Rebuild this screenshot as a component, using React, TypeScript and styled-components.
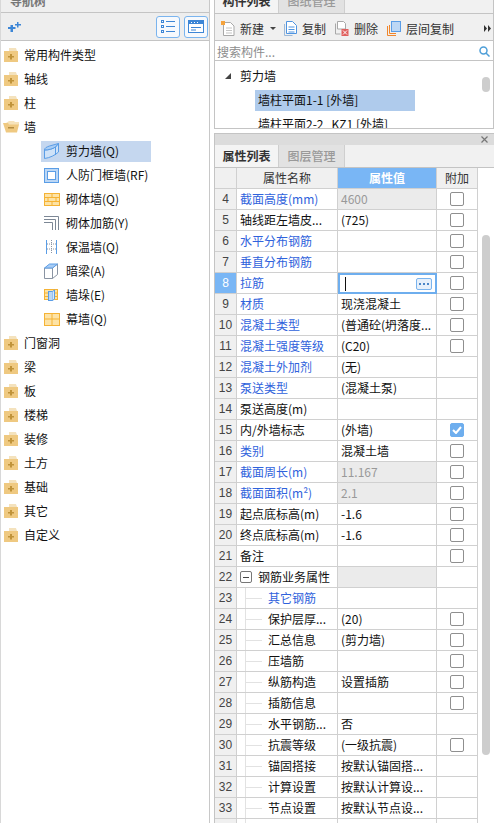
import React from "react";
import styled, { createGlobalStyle } from "styled-components";

const GlobalStyle = createGlobalStyle`
  html, body {
    margin: 0;
    padding: 0;
    background: #fff;
    overflow: hidden;
  }
  * { box-sizing: border-box; }
`;

const Page = styled.div`
  width: 494px;
  height: 823px;
  display: flex;
  overflow: hidden;
  background: #fff;
  color: #111;
  font: 12px/16px "Noto Sans CJK SC", "Liberation Sans", sans-serif;
`;

/* ---------- left navigation ---------- */
const NavPane = styled.div`
  width: 210px;
  flex: none;
  display: flex;
  flex-direction: column;
  border-right: 1px solid #c8c8c8;
  border-left: 1px solid #d8d8d8;
`;

const NavTitle = styled.div`
  height: 13px;
  flex: none;
  display: flex;
  align-items: flex-end;
  padding: 0 0 3px 9px;
  background: #efefef;
  border-bottom: 1px solid #c4c4c4;
  color: #777;
  font-weight: 700;
  overflow: hidden;
  white-space: nowrap;
`;

const NavTools = styled.div`
  height: 28px;
  flex: none;
  display: flex;
  align-items: center;
  padding: 0 1px 0 7px;
  gap: 4px;
  background: #eeeeee;
  border-bottom: 1px solid #c4c4c4;
`;

const ToolSpacer = styled.div`
  flex: 1;
`;

const ViewButton = styled.div`
  width: 24px;
  height: 22px;
  display: flex;
  align-items: center;
  justify-content: center;
  background: #f6f9fd;
  border: 1px solid #7ab4ee;
  border-radius: 3px;
`;

const NavTree = styled.div`
  padding-top: 2px;
  display: flex;
  flex-direction: column;
`;

const NavRow = styled.div<{ $child?: boolean }>`
  height: 24px;
  flex: none;
  display: flex;
  align-items: center;
  padding-left: ${(p) => (p.$child ? "40px" : "2px")};
`;

const RowIcon = styled.span<{ $child?: boolean }>`
  width: ${(p) => (p.$child ? "17px" : "21px")};
  height: 16px;
  flex: none;
  display: flex;
  align-items: center;
  margin-left: ${(p) => (p.$child ? "3px" : "0")};
  margin-right: ${(p) => (p.$child ? "5px" : "0")};
`;

const RowLabel = styled.span`
  white-space: nowrap;
`;

const ChildSelection = styled.div<{ $active?: boolean }>`
  width: 110px;
  height: 21px;
  display: flex;
  align-items: center;
  background: ${(p) => (p.$active ? "#c5d7ef" : "transparent")};
`;

const Gutter = styled.div`
  width: 4px;
  flex: none;
`;

/* ---------- right side ---------- */
const RightPane = styled.div`
  flex: 1;
  min-width: 0;
  display: flex;
  flex-direction: column;
`;

const ListPanel = styled.div`
  height: 129px;
  flex: none;
  display: flex;
  flex-direction: column;
  border: 1px solid #c4c4c4;
  border-top: 0;
  overflow: hidden;
`;

const TabStrip = styled.div<{ $clipped?: boolean }>`
  height: ${(p) => (p.$clipped ? "14px" : "23px")};
  flex: none;
  display: flex;
  align-items: ${(p) => (p.$clipped ? "flex-end" : "stretch")};
  background: #f1f1f1;
  border-bottom: 1px solid #c4c4c4;
  overflow: hidden;
`;

const Tab = styled.div<{ $active?: boolean; $clipped?: boolean }>`
  width: ${(p) => (p.$active ? "64px" : "66px")};
  height: ${(p) => (p.$clipped ? "22px" : "auto")};
  flex: none;
  display: flex;
  align-items: center;
  justify-content: center;
  font-size: 12px;
  font-weight: ${(p) => (p.$active ? 700 : 500)};
  color: ${(p) => (p.$active ? "#333" : "#999")};
  background: ${(p) => (p.$active ? "#f4f4f4" : "#e2e2e2")};
  border-right: 1px solid #cfcfcf;
  white-space: nowrap;
  padding-bottom: ${(p) => (p.$clipped ? "2px" : "0")};
`;

const ListToolbar = styled.div`
  height: 27px;
  flex: none;
  display: flex;
  align-items: center;
  padding: 3px 0 0 6px;
  background: #f0f0f0;
  border-bottom: 1px solid #c4c4c4;
  position: relative;
`;

const ToolButton = styled.div<{ $gap?: number }>`
  display: flex;
  align-items: center;
  gap: 5px;
  margin-right: ${(p) => p.$gap ?? 9}px;
  white-space: nowrap;
  color: #333;
`;

const Caret = styled.span`
  width: 0;
  height: 0;
  margin-left: 1px;
  border-left: 3px solid transparent;
  border-right: 3px solid transparent;
  border-top: 3px solid #444;
`;

const MoreArrows = styled.span`
  position: absolute;
  right: 2px;
  top: 11px;
  display: flex;
`;

const SearchBar = styled.div`
  height: 20px;
  flex: none;
  display: flex;
  align-items: center;
  justify-content: space-between;
  padding: 2px 3px 0 2px;
  color: #8d8d8d;
  border-bottom: 1px solid #c4c4c4;
`;

const ListTree = styled.div`
  flex: 1;
  padding-top: 3px;
  position: relative;
  overflow: hidden;
`;

const ListRow = styled.div<{ $indent: number }>`
  height: 24px;
  display: flex;
  align-items: center;
  padding-left: ${(p) => p.$indent}px;
  white-space: nowrap;
`;

const ListItem = styled.div<{ $active?: boolean }>`
  width: 160px;
  height: 21px;
  display: flex;
  align-items: center;
  padding-left: 3px;
  white-space: pre;
  background: ${(p) => (p.$active ? "#afcbec" : "transparent")};
`;

const Triangle = styled.span`
  width: 0;
  height: 0;
  margin-right: 9px;
  border-left: 6px solid transparent;
  border-bottom: 6px solid #444;
`;

const ThumbList = styled.div`
  position: absolute;
  right: 3px;
  top: 16px;
  width: 8px;
  height: 15px;
  border-radius: 4px;
  background: #cdcdcd;
`;

const PanelGap = styled.div`
  height: 4px;
  flex: none;
`;

const PropsPanel = styled.div`
  flex: 1;
  min-height: 0;
  display: flex;
  flex-direction: column;
  border-left: 1px solid #c4c4c4;
  overflow: hidden;
`;

const PropsTitle = styled.div`
  height: 12px;
  flex: none;
  display: flex;
  align-items: center;
  justify-content: flex-end;
  padding-right: 6px;
  background: #dcdcdc;
  border-top: 1px solid #c4c4c4;
`;

const TableWrap = styled.div`
  flex: 1;
  min-height: 0;
  display: flex;
`;

const Table = styled.div`
  width: 263px;
  flex: none;
`;

const TableRow = styled.div`
  display: grid;
  grid-template-columns: 22px 101px 99px 41px;
  height: 21px;
`;

const HeaderCell = styled.div<{ $active?: boolean }>`
  display: flex;
  align-items: center;
  justify-content: center;
  background: ${(p) => (p.$active ? "#79b6f5" : "#f0f0f0")};
  color: ${(p) => (p.$active ? "#fff" : "#333")};
  font-weight: ${(p) => (p.$active ? 700 : 400)};
  border-right: 1px solid #d0d0d0;
  border-bottom: 1px solid #d0d0d0;
`;

const NumCell = styled.div<{ $active?: boolean }>`
  display: flex;
  align-items: center;
  justify-content: center;
  background: ${(p) => (p.$active ? "#79b6f5" : "#f0f0f0")};
  color: ${(p) => (p.$active ? "#fff" : "#444")};
  border-right: 1px solid #d0d0d0;
  border-bottom: 1px solid #d0d0d0;
  font-family: "Liberation Sans", "Noto Sans CJK SC", sans-serif;
`;

const NameCell = styled.div<{ $blue?: boolean }>`
  display: flex;
  align-items: center;
  padding-left: 3px;
  white-space: nowrap;
  overflow: hidden;
  color: ${(p) => (p.$blue ? "#2f62dc" : "#111")};
  background: #fff;
  border-right: 1px solid #d0d0d0;
  border-bottom: 1px solid #d0d0d0;
`;

const ValueCell = styled.div<{ $shade?: boolean; $muted?: boolean }>`
  display: flex;
  align-items: center;
  padding-left: 3px;
  white-space: nowrap;
  overflow: hidden;
  color: ${(p) => (p.$muted ? "#999" : "#111")};
  background: ${(p) => (p.$shade ? "#ebebeb" : "#fff")};
  border-right: 1px solid #d0d0d0;
  border-bottom: 1px solid #d0d0d0;
`;

const EditCell = styled.div`
  display: flex;
  align-items: center;
  justify-content: space-between;
  padding: 0 3px 0 5px;
  background: #fff;
  border: 2px solid #6eaeee;
`;

const Cursor = styled.span`
  width: 1px;
  height: 14px;
  background: #111;
`;

const EllipsisButton = styled.span`
  width: 16px;
  height: 12px;
  display: flex;
  align-items: center;
  justify-content: center;
  border: 1px solid #7ab4ee;
  border-radius: 2px;
  background: #e6f0fb;
`;

const CheckCell = styled.div`
  display: flex;
  align-items: center;
  justify-content: center;
  background: #fff;
  border-right: 1px solid #d0d0d0;
  border-bottom: 1px solid #d0d0d0;
`;

const CheckBox = styled.span<{ $checked?: boolean }>`
  width: 14px;
  height: 14px;
  display: flex;
  align-items: center;
  justify-content: center;
  border-radius: 2px;
  border: 1px solid ${(p) => (p.$checked ? "#6eaeee" : "#8f8f8f")};
  background: ${(p) => (p.$checked ? "#6eaeee" : "#fff")};
`;

const TreeGuide = styled.span`
  width: 23px;
  flex: none;
  height: 100%;
  margin-left: 5px;
  position: relative;
  border-left: 1px solid #e2e2e2;
  &::after {
    content: "";
    position: absolute;
    left: 0;
    right: 6px;
    top: 10px;
    height: 1px;
    background: #e2e2e2;
  }
`;

const GroupToggle = styled.span`
  width: 12px;
  height: 12px;
  flex: none;
  margin: 0 6px 0 0;
  display: flex;
  align-items: center;
  justify-content: center;
  border: 1px solid #777;
  border-radius: 2px;
  &::after {
    content: "";
    width: 6px;
    height: 1px;
    background: #444;
  }
`;

const ScrollTrack = styled.div`
  flex: 1;
  position: relative;
  background: #fff;
`;

const ScrollThumb = styled.div`
  position: absolute;
  left: 4px;
  top: 67px;
  width: 8px;
  height: 520px;
  border-radius: 4px;
  background: #cdcdcd;
`;

/* ---------- icons ---------- */
const FolderIcon = ({ open }: { open?: boolean }) =>
  open ? (
    <svg width="17" height="12" viewBox="0 0 17 12">
      <path d="M3 2l3-2h5l1 1h4v3H3z" fill="#f6e3bb" />
      <path d="M0 2h5l1 1.500h10L14 11.500H3z" fill="#efc981" />
      <rect x="5" y="6" width="6" height="1.500" fill="#b48d42" />
    </svg>
  ) : (
    <svg width="15" height="14" viewBox="0 0 15 14">
      <path d="M6 0h7l1 3H6z" fill="#f4e2bd" />
      <rect x="1" y="3" width="14" height="11" fill="#efc981" />
      <path d="M7 6h2v2h2v1.500H9v2H7v-2H5V8h2z" fill="#c0933a" />
    </svg>
  );

const ChildIcon = ({ kind }: { kind: string }) => {
  switch (kind) {
    case "shear":
      return (
        <svg width="16" height="16" viewBox="0 0 16 16" fill="none">
          <path d="M.5 7c4 0 8-1 11-3l3-3.500V9c-3 3-9 6-14 6.500z" fill="#cfe2f8" stroke="#5a9de6" />
          <path d="M.5 7c0-2 2-3 5-4l9-2.500-3 3.500c-3 2-7 3-11 3z" fill="#a9cdf5" stroke="#5a9de6" />
          <path d="M11.500 4v8" stroke="#5a9de6" />
        </svg>
      );
    case "door":
      return (
        <svg width="15" height="15" viewBox="0 0 15 15" fill="none">
          <rect x=".5" y=".5" width="14" height="14" fill="#bcd7f5" stroke="#5a9de6" />
          <rect x="3.500" y="3.500" width="8" height="8" fill="#fff" stroke="#5a9de6" />
        </svg>
      );
    case "brick":
      return (
        <svg width="16" height="13" viewBox="0 0 16 13" fill="none">
          <rect x=".5" y=".5" width="15" height="12" fill="#fde3a6" stroke="#f5b335" />
          <path d="M1 4.500h14M1 8.500h14M8 1v3.500M4 4.500v4M12 4.500v4M8 8.500V12" stroke="#f5b335" />
        </svg>
      );
    case "rebar":
      return (
        <svg width="15" height="14" viewBox="0 0 15 14" fill="none" stroke="#7c8795">
          <path d="M0 .5h14.500V14M0 3.500h11.500V14M0 6.500h8.500V14" />
        </svg>
      );
    case "insul":
      return (
        <svg width="13" height="14" viewBox="0 0 13 14" fill="none">
          <path d="M2.500 0v14M12.500 0v14" stroke="#5a9de6" />
          <path d="M7.500 0v14M3 4h9M3 9h9" stroke="#8a94a3" strokeDasharray="1 1" />
        </svg>
      );
    case "beam":
      return (
        <svg width="14" height="16" viewBox="0 0 14 16" fill="none">
          <path d="M.5 5v10.500h8V5z" fill="#fff" stroke="#8a94a3" />
          <path d="M8.500 15.500l5-4V1l-5 4z" fill="#fff" stroke="#8a94a3" />
          <path d="M.5 5l5-4h8l-5 4z" fill="#a9cdf5" stroke="#5a9de6" />
        </svg>
      );
    case "pier":
      return (
        <svg width="14" height="12" viewBox="0 0 14 12" fill="none">
          <rect x=".5" y=".5" width="13" height="10" fill="#fde3a6" stroke="#f5b335" />
          <path d="M1 4h12M1 7.500h12" stroke="#f5b335" />
          <rect x="4.500" y="2.500" width="4" height="9" fill="#bcd7f5" stroke="#5a9de6" />
          <path d="M8.500 2.500l2-1.500v9l-2 1.500" fill="#d9e9fb" stroke="#5a9de6" />
        </svg>
      );
    default:
      return (
        <svg width="16" height="13" viewBox="0 0 16 13" fill="none">
          <rect x=".5" y=".5" width="15" height="12" fill="#fde3a6" stroke="#f5b335" />
          <path d="M1 6h14M8 1v11" stroke="#f5b335" />
        </svg>
      );
  }
};

const ListViewIcon = () => (
  <svg width="14" height="13" viewBox="0 0 14 13" fill="none" stroke="#3d86d6">
    <rect x=".5" y=".5" width="2" height="2" />
    <rect x=".5" y="5.500" width="2" height="2" />
    <rect x=".5" y="10.500" width="2" height="2" />
    <path d="M5 1.500h9M5 6.500h9M5 11.500h9" />
  </svg>
);

const PanelViewIcon = () => (
  <svg width="16" height="13" viewBox="0 0 16 13" fill="none">
    <rect x=".5" y=".5" width="15" height="12" fill="#fff" stroke="#3d86d6" />
    <rect x="1" y="1" width="14" height="3" fill="#3d86d6" />
    <path d="M3 2.500h1M6 2.500h1M9 2.500h1" stroke="#fff" />
    <path d="M3 7.500h10M3 10h5" stroke="#3d86d6" />
  </svg>
);

const AddNodeIcon = () => (
  <svg width="13" height="10" viewBox="0 0 13 10" fill="#3d86d6">
    <path d="M2.500 3h2.500v2h2.500v2H5v3H2.500V7H0V5h2.500z" />
    <path d="M9 0h1.500v2H13v1.500h-2.500v2H9v-2H7V2h2z" />
  </svg>
);

const NewIcon = () => (
  <svg width="14" height="15" viewBox="0 0 14 15" fill="none">
    <path d="M2.500 1.500h7l3.500 3.500v9.500H2.500z" fill="#fff" stroke="#a8a8a8" />
    <path d="M5 7h6M5 9.500h6M5 12h6" stroke="#c4c4c4" />
    <rect x="0" y="0" width="4" height="4" fill="#f5a33c" />
  </svg>
);

const CopyIcon = () => (
  <svg width="13" height="15" viewBox="0 0 13 15" fill="none" stroke="#4f94e0">
    <path d="M.5 3v11.500h8" stroke="#9db9d8" />
    <path d="M2.500.5h6l4 4v8h-10z" fill="#fff" />
    <path d="M4.500 6h6M4.500 8.500h6M4.500 11h6" />
  </svg>
);

const DeleteIcon = () => (
  <svg width="14" height="15" viewBox="0 0 14 15" fill="none">
    <path d="M.5 2.500V13h5" stroke="#a8a8a8" />
    <path d="M2.500.5h6l2 2V8h-8z" fill="#fff" stroke="#a8a8a8" />
    <rect x="6.500" y="8" width="7" height="7" fill="#e0605e" />
    <path d="M8 9.500l4 4M12 9.500l-4 4" stroke="#fff" />
  </svg>
);

const FloorCopyIcon = () => (
  <svg width="14" height="15" viewBox="0 0 14 15" fill="none">
    <path d="M.5 5v9.500H9M2.500 4v8.500H9" stroke="#f0862c" />
    <rect x="4.500" y=".5" width="9" height="10" fill="#bcd7f5" stroke="#5a9de6" />
  </svg>
);

const SearchIcon = () => (
  <svg width="11" height="11" viewBox="0 0 11 11" fill="none" stroke="#4f9fd8" strokeWidth="1.500">
    <circle cx="4.500" cy="4.500" r="3.500" />
    <path d="M7 7l3.500 3.500" />
  </svg>
);

const CheckMark = () => (
  <svg width="10" height="8" viewBox="0 0 10 8" fill="none" stroke="#fff" strokeWidth="2">
    <path d="M1 4l3 3 5-6" />
  </svg>
);

const CloseIcon = () => (
  <svg width="7" height="7" viewBox="0 0 7 7" fill="none" stroke="#777" strokeWidth="1.200">
    <path d="M.5.500l6 6M6.500.500l-6 6" />
  </svg>
);

const DotsIcon = () => (
  <svg width="10" height="2" viewBox="0 0 10 2" fill="#4a86c8">
    <rect x="0" y="0" width="2" height="2" />
    <rect x="4" y="0" width="2" height="2" />
    <rect x="8" y="0" width="2" height="2" />
  </svg>
);

/* ---------- data ---------- */
type NavItem = { label: string; icon?: string; open?: boolean; active?: boolean };

const navItems: NavItem[] = [
  { label: "常用构件类型" },
  { label: "轴线" },
  { label: "柱" },
  { label: "墙", open: true },
  { label: "剪力墙(Q)", icon: "shear", active: true },
  { label: "人防门框墙(RF)", icon: "door" },
  { label: "砌体墙(Q)", icon: "brick" },
  { label: "砌体加筋(Y)", icon: "rebar" },
  { label: "保温墙(Q)", icon: "insul" },
  { label: "暗梁(A)", icon: "beam" },
  { label: "墙垛(E)", icon: "pier" },
  { label: "幕墙(Q)", icon: "curtain" },
  { label: "门窗洞" },
  { label: "梁" },
  { label: "板" },
  { label: "楼梯" },
  { label: "装修" },
  { label: "土方" },
  { label: "基础" },
  { label: "其它" },
  { label: "自定义" },
];

type PropRow = {
  n: number;
  name: string;
  value?: string;
  blue?: boolean;
  muted?: boolean;
  check?: boolean;
  checked?: boolean;
  edit?: boolean;
  group?: boolean;
  nested?: boolean;
};

const propRows: PropRow[] = [
  { n: 4, name: "截面高度(mm)", value: "4600", blue: true, muted: true, check: true },
  { n: 5, name: "轴线距左墙皮...", value: "(725)", check: true },
  { n: 6, name: "水平分布钢筋", blue: true, check: true },
  { n: 7, name: "垂直分布钢筋", blue: true, check: true },
  { n: 8, name: "拉筋", blue: true, check: true, edit: true },
  { n: 9, name: "材质", value: "现浇混凝土", blue: true, check: true },
  { n: 10, name: "混凝土类型", value: "(普通砼(坍落度...", blue: true, check: true },
  { n: 11, name: "混凝土强度等级", value: "(C20)", blue: true, check: true },
  { n: 12, name: "混凝土外加剂", value: "(无)", blue: true },
  { n: 13, name: "泵送类型", value: "(混凝土泵)", blue: true },
  { n: 14, name: "泵送高度(m)" },
  { n: 15, name: "内/外墙标志", value: "(外墙)", check: true, checked: true },
  { n: 16, name: "类别", value: "混凝土墙", blue: true, check: true },
  { n: 17, name: "截面周长(m)", value: "11.167", blue: true, muted: true, check: true },
  { n: 18, name: "截面面积(m²)", value: "2.1", blue: true, muted: true, check: true },
  { n: 19, name: "起点底标高(m)", value: "-1.6", check: true },
  { n: 20, name: "终点底标高(m)", value: "-1.6", check: true },
  { n: 21, name: "备注", check: true },
  { n: 22, name: "钢筋业务属性", group: true },
  { n: 23, name: "其它钢筋", blue: true, nested: true },
  { n: 24, name: "保护层厚...", value: "(20)", nested: true, check: true },
  { n: 25, name: "汇总信息", value: "(剪力墙)", nested: true, check: true },
  { n: 26, name: "压墙筋", nested: true, check: true },
  { n: 27, name: "纵筋构造", value: "设置插筋", nested: true, check: true },
  { n: 28, name: "插筋信息", nested: true, check: true },
  { n: 29, name: "水平钢筋...", value: "否", nested: true },
  { n: 30, name: "抗震等级", value: "(一级抗震)", nested: true, check: true },
  { n: 31, name: "锚固搭接", value: "按默认锚固搭...", nested: true },
  { n: 32, name: "计算设置", value: "按默认计算设...", nested: true },
  { n: 33, name: "节点设置", value: "按默认节点设...", nested: true },
  { n: 34, name: "", nested: true },
];

const App = () => (
  <Page>
    <GlobalStyle />
    <NavPane>
      <NavTitle>导航树</NavTitle>
      <NavTools>
        <AddNodeIcon />
        <ToolSpacer />
        <ViewButton>
          <ListViewIcon />
        </ViewButton>
        <ViewButton>
          <PanelViewIcon />
        </ViewButton>
      </NavTools>
      <NavTree>
        {navItems.map((item) =>
          item.icon ? (
            <NavRow $child key={item.label}>
              <ChildSelection $active={item.active}>
                <RowIcon $child>
                  <ChildIcon kind={item.icon} />
                </RowIcon>
                <RowLabel>{item.label}</RowLabel>
              </ChildSelection>
            </NavRow>
          ) : (
            <NavRow key={item.label}>
              <RowIcon>
                <FolderIcon open={item.open} />
              </RowIcon>
              <RowLabel>{item.label}</RowLabel>
            </NavRow>
          )
        )}
      </NavTree>
    </NavPane>
    <Gutter />
    <RightPane>
      <ListPanel>
        <TabStrip $clipped>
          <Tab $active $clipped>
            构件列表
          </Tab>
          <Tab $clipped>图纸管理</Tab>
        </TabStrip>
        <ListToolbar>
          <ToolButton $gap={8}>
            <NewIcon />
            新建
            <Caret />
          </ToolButton>
          <ToolButton>
            <CopyIcon />
            复制
          </ToolButton>
          <ToolButton>
            <DeleteIcon />
            删除
          </ToolButton>
          <ToolButton>
            <FloorCopyIcon />
            层间复制
          </ToolButton>
          <MoreArrows>
            <svg width="7" height="7" viewBox="0 0 7 7" fill="#333">
              <path d="M0 0l3 3.500L0 7zM4 0l3 3.500L4 7z" />
            </svg>
          </MoreArrows>
        </ListToolbar>
        <SearchBar>
          搜索构件...
          <SearchIcon />
        </SearchBar>
        <ListTree>
          <ListRow $indent={10}>
            <Triangle />
            剪力墙
          </ListRow>
          <ListRow $indent={40}>
            <ListItem $active>墙柱平面1-1 [外墙]</ListItem>
          </ListRow>
          <ListRow $indent={40}>
            <ListItem>墙柱平面2-2   KZ1 [外墙]</ListItem>
          </ListRow>
          <ThumbList />
        </ListTree>
      </ListPanel>
      <PanelGap />
      <PropsPanel>
        <PropsTitle>
          <CloseIcon />
        </PropsTitle>
        <TabStrip>
          <Tab $active>属性列表</Tab>
          <Tab>图层管理</Tab>
        </TabStrip>
        <TableWrap>
          <Table>
            <TableRow>
              <HeaderCell />
              <HeaderCell>属性名称</HeaderCell>
              <HeaderCell $active>属性值</HeaderCell>
              <HeaderCell>附加</HeaderCell>
            </TableRow>
            {propRows.map((row) => (
              <TableRow key={row.n}>
                <NumCell $active={row.edit}>{row.n}</NumCell>
                <NameCell $blue={row.blue}>
                  {row.group && <GroupToggle />}
                  {row.nested && <TreeGuide />}
                  {row.nested ? <span>{row.name}</span> : row.name}
                </NameCell>
                {row.edit ? (
                  <EditCell>
                    <Cursor />
                    <EllipsisButton>
                      <DotsIcon />
                    </EllipsisButton>
                  </EditCell>
                ) : (
                  <ValueCell $shade={row.muted || row.group} $muted={row.muted}>
                    {row.value}
                  </ValueCell>
                )}
                <CheckCell>
                  {row.check && (
                    <CheckBox $checked={row.checked}>{row.checked && <CheckMark />}</CheckBox>
                  )}
                </CheckCell>
              </TableRow>
            ))}
          </Table>
          <ScrollTrack>
            <ScrollThumb />
          </ScrollTrack>
        </TableWrap>
      </PropsPanel>
    </RightPane>
  </Page>
);

export default App;
